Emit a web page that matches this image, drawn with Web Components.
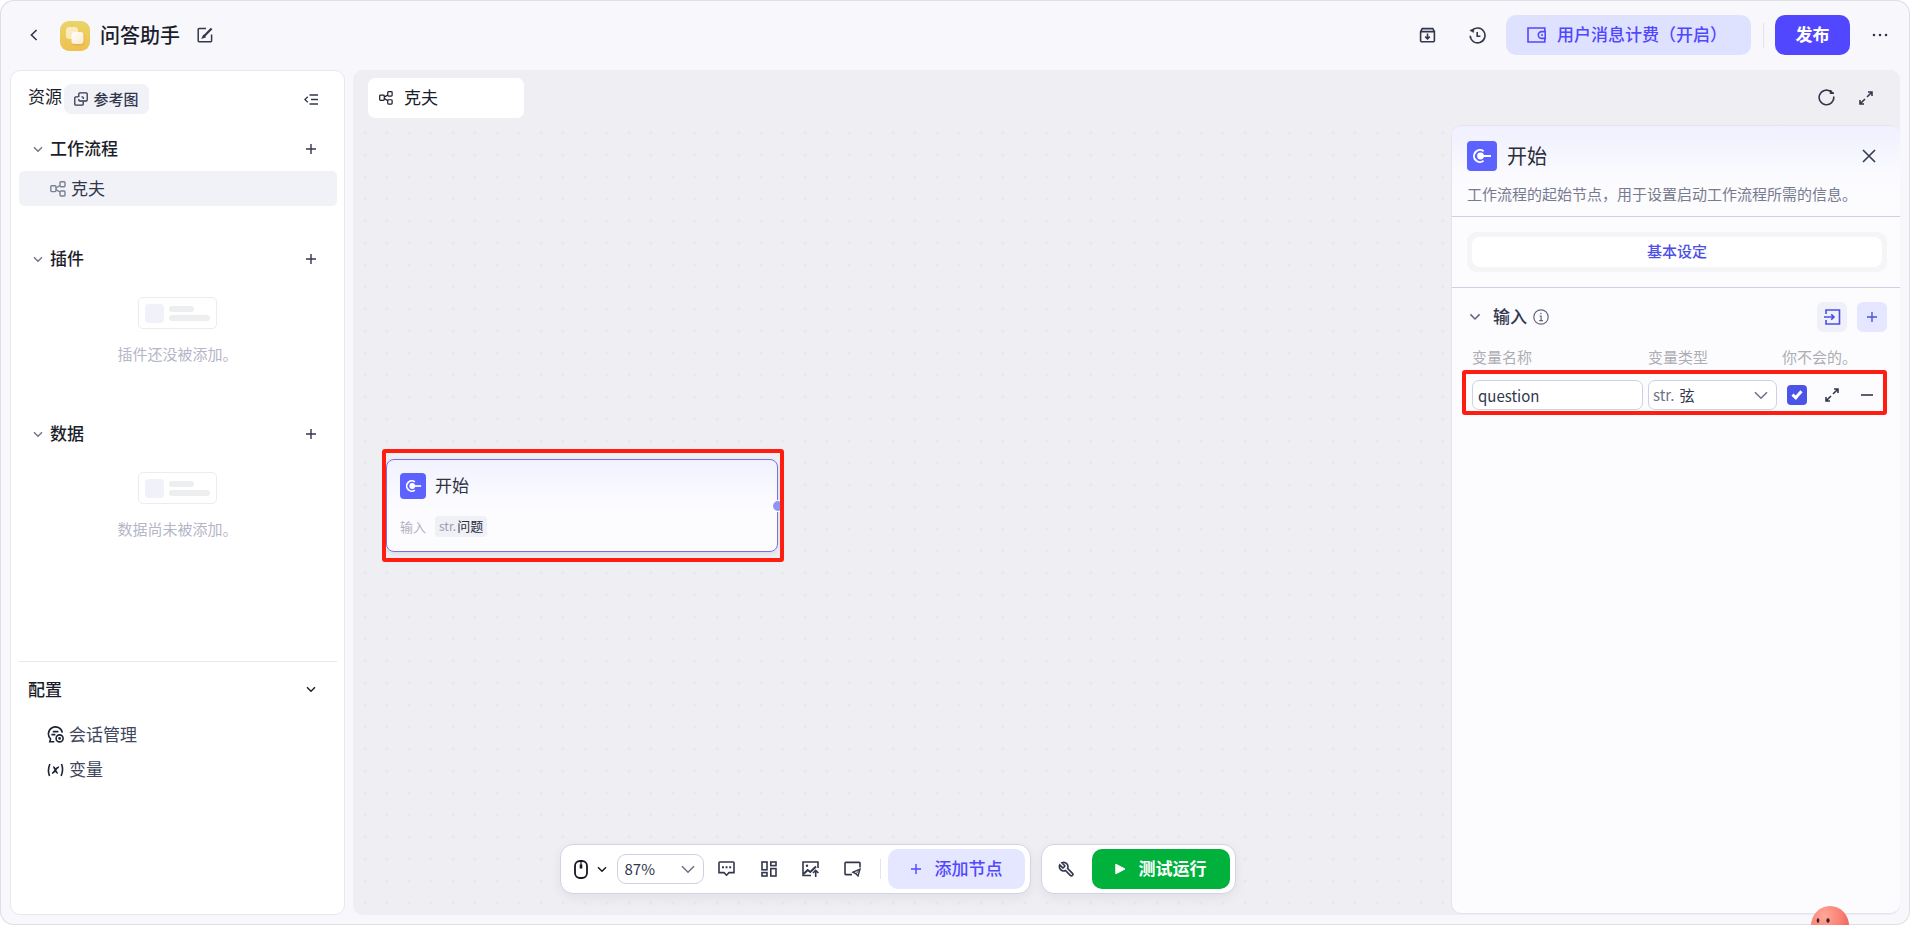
<!DOCTYPE html>
<html lang="zh-CN">
<head>
<meta charset="utf-8">
<title>问答助手</title>
<style>
  html, body { margin: 0; height: 100%; }
  body {
    background: #fff;
    font-family: "Noto Sans CJK SC", "Noto Sans", sans-serif;
    font-size: 17px;
    line-height: 24px;
    color: #1b1d2b;
    --accent: #5147ff;
    --ink: #33374d;
    --mute: #6f7488;
    --line: #e7e7f0;
    --mark: #ff1d12;
  }
</style>
</head>
<body>
<app-shell>
  <app-header slot="header" name="问答助手"></app-header>
  <side-panel slot="side"></side-panel>
  <flow-canvas slot="main">
    <flow-node heading="开始"></flow-node>
    <tool-bar slot="tools"></tool-bar>
    <node-panel slot="panel" heading="开始"></node-panel>
  </flow-canvas>
  <helper-mascot slot="helper"></helper-mascot>
</app-shell>

<script>
const BASE = `
  :host, *, *::before, *::after { box-sizing: border-box; }
  button, input, select { font: inherit; color: inherit; margin: 0; padding: 0; }
  button { display: inline-flex; align-items: center; justify-content: center;
           border: 0; background: none; cursor: pointer; flex: none; }
  h1, h2, h3, p { margin: 0; font-size: inherit; font-weight: inherit; }
  .t { padding-bottom: 2px; }
`;

function define(name, css, html, setup) {
  const template = document.createElement('template');
  template.innerHTML = `<style>${BASE}${css}</style>${html}`;
  customElements.define(name, class extends HTMLElement {
    constructor() {
      super();
      this.attachShadow({ mode: 'open' }).append(template.content.cloneNode(true));
    }
    connectedCallback() { if (setup) setup(this, this.shadowRoot); }
  });
}

/* Each entry: width, height, stroke width, drawing. */
const ICONS = {
  back: [8, 12, 1.6, '<path d="M6.6 1 1.4 6l5.2 5"/>'],
  edit: [16, 16, 1.5, '<path d="M9 1.6H2.2a1 1 0 0 0-1 1v11.2a1 1 0 0 0 1 1h11.4a1 1 0 0 0 1-1V7.5"/><path d="M6.8 9.6 14.6 1.4" stroke-width="2.2"/><path d="m5.6 10.8.9-2 1.3 1.2Z" fill="currentColor"/>'],
  archive: [17, 16, 1.6, '<path d="M1.6 4.6h13.8v8.8a1.4 1.4 0 0 1-1.4 1.4H3a1.4 1.4 0 0 1-1.4-1.4V4.6L3.2 1.6h10.6l1.6 3"/><path d="M8.5 6.6v5M6.2 9.6l2.3 2.2 2.3-2.2"/>'],
  history: [17, 17, 1.6, '<path d="M3 3.6A7.4 7.4 0 1 1 1.2 8.8"/><path d="M.9 3.4 4.8 1.8 4.6 5.4Z" fill="currentColor" stroke-width=".6"/><path d="M8.2 5v4.3h3.2"/>'],
  wallet: [19, 16, 1.6, '<path d="M17.8 4V1H1v14h16.800v-3"/><path d="M18.200 4.600h-3.500a3.400 3.400 0 0 0 0 6.800h3.500Z"/><path d="M15 7.200v1.600" stroke-width="2"/>'],
  dots: [16, 4, 0, '<g fill="currentColor"><circle cx="2" cy="2" r="1.300"/><circle cx="8" cy="2" r="1.300"/><circle cx="14" cy="2" r="1.300"/></g>'],
  copy: [14, 14, 1.3, '<path d="M4.500 4.800H1.800a1 1 0 0 0-1 1v6.400a1 1 0 0 0 1 1h6.400a1 1 0 0 0 1-1V9.500"/><path d="M9.300 7V5.800a1 1 0 0 0-1-1H7.500"/><path d="M4.800 7v1a1 1 0 0 0 1 1h6.400a1 1 0 0 0 1-1V1.800a1 1 0 0 0-1-1H5.800a1 1 0 0 0-1 1V5"/>'],
  collapse: [14, 11, 1.4, '<path d="M5.500 1H14M7 5.500h7M5.500 10H14M3.800 2.800.900 5.500l2.900 2.700"/>'],
  down: [10, 7, 1.4, '<path d="m1 1.200 4 4 4-4"/>'],
  downWide: [14, 9, 1.6, '<path d="m1 1.200 6 6 6-6"/>'],
  plus: [12, 12, 1.4, '<path d="M6 1v10M1 6h10"/>'],
  flow: [16, 16, 1.4, '<rect x=".800" y="4.800" width="5.200" height="5.800" rx="1"/><rect x="10" y=".800" width="5" height="5" rx="1"/><rect x="10" y="10" width="5" height="5" rx="1"/><path d="m6 7 4-2.500M6 8.600l4 2.400"/>'],
  chat: [17, 17, 1.6, '<path d="M15.300 6.600A7 7 0 1 0 3.600 13l-.8 2.700h4.500"/><path d="M5.800 5.600h5.600M4.400 8.600h4"/><circle cx="12.600" cy="12.400" r="3.500"/><circle cx="12.600" cy="12.400" r=".6" fill="currentColor"/>'],
  variable: [17, 14, 1.6, '<path d="M2.900 1Q.200 7 2.500 13M14.500 1Q16.800 7 14.100 13"/><path d="M5 10.100c2.800.4 3.700-6.300 6.900-6M6.200 4.300c2.200-.6 2.200 6.200 4.600 5.600" stroke-width="1.800"/>'],
  refresh: [17, 17, 1.6, '<path d="M15.700 7.500A7.300 7.300 0 1 1 12.700 2.500M15.800 8.500q0 2-1 3.700"/><path d="M12.600 1v3.200h3.400" fill="currentColor"/>'],
  expand: [14, 14, 1.6, '<path d="M9 1h4v4M12.800 1.200 8 6M5 13H1V9M1.200 12.800 6 8"/>'],
  close: [14, 14, 1.7, '<path d="m1 1 12 12M13 1 1 13"/>'],
  info: [16, 16, 1.2, '<circle cx="8" cy="8" r="7.200"/><path d="M6.500 7h1.600v4.600M6.200 11.600h3.800" /><circle cx="7.900" cy="4.500" r=".8" fill="currentColor" stroke="none"/>'],
  importIn: [17, 16, 1.6, '<path d="M2 5V1h13.500v14H2v-4"/><path d="M0 8h9.500M7.200 5.400 10 8l-2.800 2.600"/>'],
  minus: [12, 12, 1.6, '<path d="M0 6h12"/>'],
  mouse: [14, 19, 1.8, '<rect x="1" y="1" width="12" height="17" rx="5"/><path d="M7 4.500v4" stroke-width="2.600"/><path d="M7 1v4" stroke-width="1.200"/>'],
  comment: [17, 16, 1.6, '<path d="M1.800 1h13.400a.8.8 0 0 1 .8.800v9.800h-5L8.500 14.200 6 11.600H1V1.800A.8.8 0 0 1 1.800 1Z"/><path d="M4 6.200h1.900M7.600 6.200h1.900M11.200 6.200h1.900" stroke-width="1.900"/>'],
  blocks: [16, 16, 1.6, '<rect x="1" y="1" width="5" height="7.800"/><rect x="9.800" y="1" width="5.200" height="3.600"/><rect x="1" y="11.600" width="5" height="3.400"/><rect x="9.800" y="7.600" width="5.200" height="7.400"/>'],
  picture: [17, 16, 1.6, '<path d="M16 7V1H1v13.500h8"/><path d="m1.500 13 4.200-4 2.600 2L14 5.500" stroke-width="2"/><circle cx="5" cy="4.800" r="1.200" fill="currentColor" stroke="none"/><path d="M13.700 16V9.500M11 12l2.700-2.700 2.700 2.700"/>'],
  note: [17, 16, 1.6, '<path d="M16 6.500V2.200a.8.8 0 0 0-.8-.8H1.800a.8.8 0 0 0-.8.800v10.600a.8.8 0 0 0 .8.800H8"/><path d="m9 11.200 7-3-2 6.800-2-2.200Z" stroke-width="1.400"/><path d="m12 12.800 3-3.500" stroke-width="1"/>'],
  wrench: [24, 24, 2.3, '<path transform="translate(24 0) scale(-1 1)" d="M14.700 6.300a1 1 0 0 0 0 1.400l1.600 1.600a1 1 0 0 0 1.400 0l3.770-3.770a6 6 0 0 1-7.940 7.940l-6.910 6.910a2.120 2.120 0 0 1-3-3l6.910-6.910a6 6 0 0 1 7.940-7.940l-3.760 3.760z"/>'],
  play: [11, 12, 1, '<path d="M.8 1.200v9.600L10 6Z" fill="currentColor" stroke-linejoin="round"/>'],
  start: [20, 16, 2, '<path d="M11.600 3.200A6 6 0 1 0 11.600 12.800"/><path d="M8 8h11"/><circle cx="8.500" cy="8" r="3.400" fill="currentColor" stroke="none"/>']
};

define('ui-icon', `
  :host { display: inline-flex; flex: none; }
  svg { display: block; fill: none; stroke: currentColor; }
`, `<svg aria-hidden="true"></svg>`, (host, root) => {
  const [w, h, stroke, art] = ICONS[host.getAttribute('name')];
  const scale = Number(host.getAttribute('scale') || 100) / 100;
  const svg = root.querySelector('svg');
  svg.setAttribute('viewBox', `0 0 ${w} ${h}`);
  svg.setAttribute('width', Math.round(w * scale));
  svg.setAttribute('height', Math.round(h * scale));
  svg.setAttribute('stroke-width', stroke);
  svg.innerHTML = art;
});

define('app-shell', `
  :host { display: block; height: 100%; position: relative; overflow: hidden; }
  .frame { min-height: 100%; display: grid; grid-template: 70px 1fr / 335px 1fr; column-gap: 8px;
           padding: 0 10px 10px; background: #f7f7fc; border-radius: 14px;
           box-shadow: inset 0 0 0 1px #dedfe2; }
  header { grid-column: 1 / -1; display: grid; }
  aside, main { display: grid; min-width: 0; }
`, `<div class="frame">
  <header><slot name="header"></slot></header>
  <aside><slot name="side"></slot></aside>
  <main><slot name="main"></slot></main>
</div><slot name="helper"></slot>`);

define('app-header', `
  :host { display: flex; align-items: center; height: 70px; padding: 0 6px 0 20px; color: var(--ink); }
  .logo { width: 30px; height: 30px; margin: 2px 10px 0 22px; }
  h1 { font-size: 20px; line-height: 30px; color: #1b1d2b; font-weight: 500; margin-right: 17px; }
  .right { margin-left: auto; display: flex; align-items: center; }
  .tool { width: 50px; height: 40px; }
  .bill { width: 245px; height: 40px; margin-left: 4px; padding-left: 21px; justify-content: flex-start; gap: 11px;
          border-radius: 10px; background: #dfe2ff; color: var(--accent); font-weight: 500; }
  .bill span { white-space: nowrap; }
  .rule { width: 1px; height: 25px; background: #e2e2ea; margin: 0 11px 0 12px; }
  .publish { width: 75px; height: 40px; border-radius: 10px; background: var(--accent); color: #fff; font-weight: 700; margin-right: 16px; }
  .more { width: 28px; height: 40px; }
`, `<button aria-label="返回"><ui-icon name="back"></ui-icon></button>
<svg class="logo" viewBox="0 0 30 30" aria-hidden="true">
  <defs>
    <linearGradient id="a" x1="0" y1="0" x2="0" y2="1"><stop offset="0" stop-color="#e9d567"/><stop offset="1" stop-color="#efc04f"/></linearGradient>
    <linearGradient id="b" x1="0" y1="0" x2="1" y2="1"><stop offset="0" stop-color="#fff"/><stop offset="1" stop-color="#fde8cb"/></linearGradient>
  </defs>
  <rect width="30" height="30" rx="9" fill="url(#a)"/>
  <rect x="6" y="6" width="12" height="12" rx="3" fill="#fff3dc" opacity=".75"/>
  <rect x="12" y="12" width="12.500" height="12.500" rx="3" fill="#d99a30" opacity=".4"/>
  <rect x="11.500" y="11" width="12" height="12" rx="3" fill="url(#b)"/>
</svg>
<h1></h1>
<button aria-label="编辑"><ui-icon name="edit"></ui-icon></button>
<div class="right">
  <button class="tool" aria-label="归档"><ui-icon name="archive"></ui-icon></button>
  <button class="tool" aria-label="历史"><ui-icon name="history"></ui-icon></button>
  <button class="bill"><ui-icon name="wallet"></ui-icon><span class="t">用户消息计费（开启）</span></button>
  <div class="rule"></div>
  <button class="publish"><span class="t">发布</span></button>
  <button class="more" aria-label="更多"><ui-icon name="dots"></ui-icon></button>
</div>`, (host, root) => { root.querySelector('h1').textContent = host.getAttribute('name'); });

define('side-section', `
  :host { display: block; }
  .head { display: flex; align-items: center; height: 40px; padding: 0 20px 0 14px; }
  h3 { font-weight: 500; margin-left: 7px; }
  ui-icon[name=down] { color: var(--mute); }
  button { margin-left: auto; color: var(--ink); width: 12px; height: 24px; }
`, `<div class="head"><ui-icon name="down"></ui-icon><h3 class="t"></h3>
  <button aria-label="添加"><ui-icon name="plus"></ui-icon></button></div>
<slot></slot>`, (host, root) => {
  root.querySelector('h3').textContent = host.getAttribute('heading');
});

define('empty-state', `
  :host { display: flex; flex-direction: column; align-items: center; padding: 18px 1px 0 0; }
  .card { display: grid; grid-template-columns: 19px 1fr; gap: 5px; align-items: center;
          width: 79px; height: 32px; padding: 0 6px; border: 1px solid #ececee; border-radius: 5px; }
  .pic { height: 19px; border-radius: 4px; background: #f1f2f9; }
  .bars { display: grid; gap: 3px; }
  .bars i { height: 6px; border-radius: 3px; background: #edeef0; }
  .bars i:first-child { width: 25px; }
  p { margin-top: 13px; font-size: 15px; color: #b4b6c8; }
`, `<div class="card"><div class="pic"></div><div class="bars"><i></i><i></i></div></div><p><slot></slot></p>`);

define('side-panel', `
  :host { display: flex; flex-direction: column; background: #fff; border: 1px solid var(--line);
          border-radius: 10px; padding: 13px 7px 13px 8px; }
  .top { display: flex; align-items: center; height: 30px; padding: 0 19px 0 9px; color: var(--ink); }
  .top h2 { align-self: flex-start; color: #1b1d2b; }
  .ref { width: 85px; height: 30px; margin-left: 2px; gap: 5px; border-radius: 7px; background: #f1f2f8; font-size: 15px;
         font-weight: 500; }
  .fold { margin-left: auto; height: 30px; }
  .groups { height: 548px; padding-top: 15px; display: flex; flex-direction: column; border-bottom: 1px solid var(--line); }
  .groups side-section:nth-child(1) { height: 110px; }
  .groups side-section:nth-child(2) { height: 175px; }
  .item { display: flex; align-items: center; gap: 5px; width: 100%; height: 35px; margin-top: 2px; padding-left: 31px;
          background: #f1f2f8; border-radius: 5px; color: var(--ink); text-decoration: none; }
  .item ui-icon { color: #7a7f92; }
  .conf { display: flex; align-items: center; justify-content: space-between; height: 55px; padding: 0 21px 0 9px; }
  .conf h2 { font-weight: 500; }
  .link { display: flex; align-items: center; gap: 5px; height: 35px; padding-left: 28px; color: #414660; text-decoration: none; }
  .link ui-icon { color: #1f2233; }
`, `<div class="top"><h2>资源</h2>
  <button class="ref"><ui-icon name="copy"></ui-icon>参考图</button>
  <button class="fold" aria-label="收起"><ui-icon name="collapse"></ui-icon></button></div>
<div class="groups">
  <side-section heading="工作流程"><a class="item" href="#flow"><ui-icon name="flow"></ui-icon><span class="t">克夫</span></a></side-section>
  <side-section heading="插件"><empty-state>插件还没被添加。</empty-state></side-section>
  <side-section heading="数据"><empty-state>数据尚未被添加。</empty-state></side-section>
</div>
<div class="conf"><h2 class="t">配置</h2><button aria-label="展开"><ui-icon name="down"></ui-icon></button></div>
<a class="link" href="#chat"><ui-icon name="chat"></ui-icon><span class="t">会话管理</span></a>
<a class="link" href="#vars"><ui-icon name="variable"></ui-icon><span class="t">变量</span></a>`);

define('flow-canvas', `
  :host { display: flex; flex-direction: column; min-width: 0; border-radius: 10px; background: #efeef3;
          background-image: radial-gradient(circle, #e7e7ec 1px, transparent 2px);
          background-size: 22px 22px; background-position: 1px 8px; overflow: hidden; }
  .bar { display: flex; align-items: center; height: 55px; padding: 0 20px 0 15px; background: #efeef3; color: var(--ink); }
  .tab { display: flex; align-items: center; gap: 11px; width: 156px; height: 40px; padding-left: 11px;
         border-radius: 7px; background: #fff; color: #1b1d2b; text-decoration: none; }
  .acts { margin-left: auto; display: flex; }
  .acts button { width: 40px; height: 40px; }
  .acts button + button { width: 28px; margin-left: 6px; }
  .work { flex: 1; display: flex; min-height: 0; }
  .stage { flex: 1; position: relative; display: flex; flex-direction: column; justify-content: flex-end; align-items: center;
           padding: 0 9px 21px 0; }
`, `<div class="bar"><a class="tab" href="#flow"><ui-icon name="flow" scale="88"></ui-icon><span class="t">克夫</span></a>
  <div class="acts"><button aria-label="刷新"><ui-icon name="refresh"></ui-icon></button>
  <button aria-label="全屏"><ui-icon name="expand"></ui-icon></button></div></div>
<div class="work"><div class="stage"><slot></slot><slot name="tools"></slot></div><slot name="panel"></slot></div>`);

/* A node has a free place on the canvas; the red frame marks it for the reader. */
define('flow-node', `
  :host { position: absolute; left: 29px; top: 324px; width: 402px; height: 113px; padding: 6px 2px 6px 0;
          border: 4px solid var(--mark); border-radius: 3px; overflow: hidden; }
  .card { position: relative; height: 93px; padding: 13px 13px; border: 1px solid #776fee; border-radius: 8px;
          background: linear-gradient(#f2f2ff, #fcfcff 55%); box-shadow: 0 2px 5px #00001014; }
  .title { display: flex; align-items: center; gap: 9px; height: 26px; color: #30323f; }
  .badge { display: grid; place-items: center; width: 26px; height: 26px; border-radius: 4px; background: #5c62ff; color: #fff; }
  .row { display: flex; align-items: center; gap: 9px; margin-top: 17px; font-size: 13px; line-height: 20px; color: #b0b2c4; }
  .chip { display: flex; gap: 1px; padding: 0 4px; height: 21px; border-radius: 4px; background: #f0f0f7; color: #9a9db0; font-size: 12px; }
  .chip b { font-size: 13px; font-weight: 400; color: #2b2e40; }
  .port { position: absolute; right: -6px; top: 41px; width: 10px; height: 10px; border-radius: 50%;
          background: #8f96f2; box-shadow: 0 0 0 1px #fff; }
`, `<div class="card"><div class="title"><span class="badge"><ui-icon name="start" scale="85"></ui-icon></span><h3 class="t"></h3></div>
  <div class="row"><span>输入</span><span class="chip">str.<b>问题</b></span></div><div class="port"></div></div>`,
  (host, root) => { root.querySelector('h3').textContent = host.getAttribute('heading'); });

define('tool-bar', `
  :host { display: flex; gap: 10px; color: var(--ink); }
  .box { display: flex; align-items: center; height: 50px; padding: 0 5px 0 13px; border: 1px solid #d2d4e4;
         border-radius: 13px; background: #fff; box-shadow: 0 4px 12px #0000200f; }
  .mode { gap: 9px; color: #15161f; margin-right: 10px; height: 40px; }
  .zoom { display: flex; align-items: center; position: relative; width: 87px; height: 30px; border: 1px solid #cfd1e2; border-radius: 9px; margin-right: 2px; }
  select { appearance: none; width: 100%; height: 28px; padding: 0 0 0 7px; border: 0; background: none; font-size: 15px; outline: 0; }
  .zoom ui-icon { position: absolute; right: 8px; color: var(--mute); pointer-events: none; }
  .tool { width: 42px; height: 40px; }
  .rule { width: 1px; height: 20px; margin: 0 7px 0 6px; background: #e4e4ec; }
  .add { width: 137px; height: 40px; gap: 13px; border-radius: 10px; background: #e5e6ff; color: var(--accent); font-weight: 500; }
  .box.run { padding-left: 16px; }
  .test { width: 138px; height: 40px; gap: 13px; border-radius: 10px; background: #00b13c; color: #fff; font-weight: 700; margin-left: 17px; }
`, `<div class="box">
  <button class="mode" aria-label="鼠标模式"><ui-icon name="mouse"></ui-icon><ui-icon name="down"></ui-icon></button>
  <label class="zoom"><select aria-label="缩放"><option>87%</option></select><ui-icon name="downWide"></ui-icon></label>
  <button class="tool" aria-label="评论"><ui-icon name="comment"></ui-icon></button>
  <button class="tool" aria-label="布局"><ui-icon name="blocks"></ui-icon></button>
  <button class="tool" aria-label="导出图片"><ui-icon name="picture"></ui-icon></button>
  <button class="tool" aria-label="便签"><ui-icon name="note"></ui-icon></button>
  <div class="rule"></div>
  <button class="add"><ui-icon name="plus"></ui-icon><span class="t">添加节点</span></button>
</div>
<div class="box run">
  <button aria-label="调试"><ui-icon name="wrench" scale="72"></ui-icon></button>
  <button class="test"><ui-icon name="play"></ui-icon><span class="t">测试运行</span></button>
</div>`);

define('node-panel', `
  :host { display: block; width: 449px; flex: none; margin-bottom: 1px; background: #fcfcff; border: 1px solid #e4e4ee;
          border-right: 0; border-radius: 10px; color: var(--ink); overflow: hidden; }
  .head { padding: 15px 24px 10px 15px; border-bottom: 1px solid #cfcfe2; background: linear-gradient(#f0f0ff, #fcfcff 65%); }
  .title { display: flex; align-items: center; height: 30px; gap: 10px; font-size: 20px; color: #2b2d3a; }
  .badge { display: grid; place-items: center; width: 30px; height: 30px; border-radius: 4px; background: #5c62ff; color: #fff; }
  .title button { margin-left: auto; color: #3a3f55; }
  .head p { margin-top: 11px; font-size: 15px; color: #777b8e; white-space: nowrap; }
  .tabs { padding: 15px 13px 15px 15px; border-bottom: 1px solid #cfcfe2; }
  .tabs div { padding: 5px; border-radius: 9px; background: #f5f5f8; }
  .tabs button { width: 100%; height: 30px; padding-bottom: 2px; border-radius: 8px; background: #fff; color: #4c4fe6; font-size: 15px; font-weight: 500; }
  .sect { display: flex; align-items: center; height: 30px; margin: 14px 13px 0 17px; }
  .sect h3 { margin: 0 6px 0 12px; font-weight: 500; }
  .sect ui-icon { color: #62677c; }
  .sq { width: 30px; height: 30px; border-radius: 6px; background: #f0f1f8; }
  .sq.first { margin-left: auto; }
  .sq + .sq { margin-left: 10px; background: #e5e6ff; }
  .sq ui-icon { color: #4c4fe6; }
  .labels, .row { display: grid; grid-template-columns: 171px 129px 1fr; column-gap: 5px; }
  .labels { margin: 13px 13px 1px 20px; font-size: 15px; color: #adadb3; }
  .row { margin: 0 13px 0 10px; height: 45px; padding: 0 11px 1px 6px; align-items: end;
         border: 4px solid var(--mark); border-radius: 3px; font-size: 15px; }
  input[type=text], .type { height: 30px; border: 1px solid #cfd1e2; border-radius: 7px; background: #fff; padding: 0 5px; outline: 0; width: 100%; }
  .type { display: flex; align-items: center; gap: 5px; position: relative; color: #70748a; padding: 0 4px; }
  select { appearance: none; flex: 1; min-width: 0; border: 0; background: none; color: var(--ink); outline: 0; }
  .type ui-icon { position: absolute; right: 8px; pointer-events: none; }
  .end { display: flex; align-items: center; margin-left: 5px; }
  .end button { width: 14px; height: 30px; margin-left: 18px; }
  .end button + button { margin-left: 22px; width: 12px; }
  input[type=checkbox] { appearance: none; flex: none; width: 20px; height: 20px; border-radius: 4px; display: grid; place-items: center; background: #4c53e8; }
  input[type=checkbox]::after { content: ""; width: 6px; height: 10px; margin-top: -2px; border: solid #fff; border-width: 0 3px 3px 0; transform: rotate(42deg); }
`, `<div class="head"><div class="title"><span class="badge"><ui-icon name="start"></ui-icon></span><h2></h2>
    <button aria-label="关闭"><ui-icon name="close"></ui-icon></button></div>
  <p>工作流程的起始节点，用于设置启动工作流程所需的信息。</p></div>
<div class="tabs"><div><button>基本设定</button></div></div>
<div class="sect"><ui-icon name="down" scale="120"></ui-icon><h3 class="t">输入</h3><ui-icon name="info"></ui-icon>
  <button class="sq first" aria-label="导入"><ui-icon name="importIn"></ui-icon></button>
  <button class="sq" aria-label="添加"><ui-icon name="plus"></ui-icon></button></div>
<div class="labels"><label for="name">变量名称</label><label for="type">变量类型</label><label for="need">你不会的。</label></div>
<div class="row"><input type="text" id="name" value="question">
  <div class="type"><span>str.</span><select id="type"><option>弦</option></select><ui-icon name="downWide"></ui-icon></div>
  <div class="end"><input type="checkbox" id="need" checked>
    <button aria-label="展开"><ui-icon name="expand"></ui-icon></button>
    <button aria-label="删除"><ui-icon name="minus"></ui-icon></button></div></div>`,
  (host, root) => { root.querySelector('h2').textContent = host.getAttribute('heading'); });

define('helper-mascot', `
  :host { position: absolute; right: 60px; bottom: 0; width: 40px; height: 19px; overflow: hidden; }
  svg { display: block; }
`, `<svg width="40" height="40" viewBox="0 0 40 40" role="img" aria-label="助手">
  <defs><radialGradient id="m" cx=".35" cy=".25" r=".75"><stop offset="0" stop-color="#ffa898"/><stop offset=".6" stop-color="#f97f74"/><stop offset="1" stop-color="#e8605c"/></radialGradient></defs>
  <ellipse cx="20" cy="20" rx="19" ry="20" fill="url(#m)"/>
  <ellipse cx="8" cy="14.500" rx="1.300" ry="2.200" fill="#3a2326"/><ellipse cx="18" cy="14.500" rx="1.600" ry="2.200" fill="#3a2326"/></svg>`);
</script>
</body>
</html>
